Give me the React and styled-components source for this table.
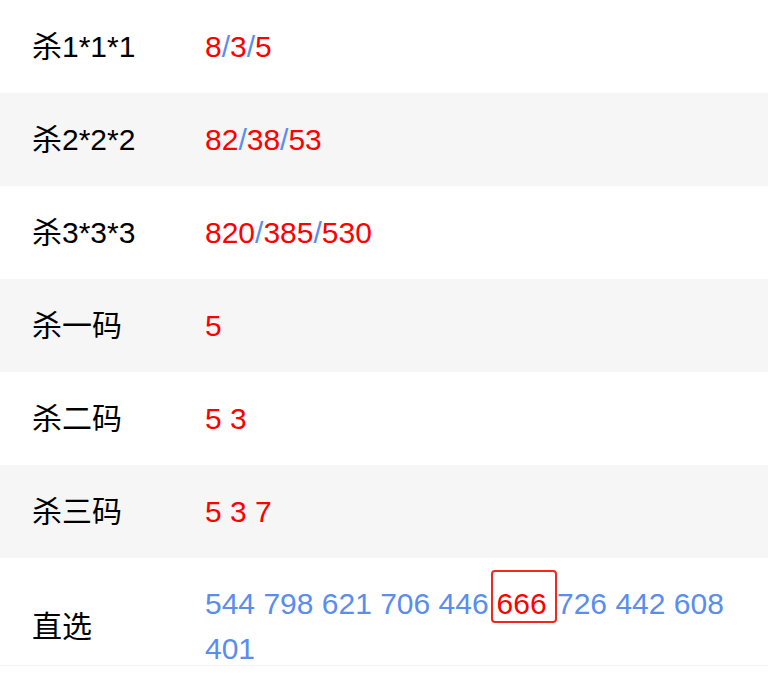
import React from 'react';
import styled, { createGlobalStyle } from 'styled-components';

const Global = createGlobalStyle`
    body {
        margin: 0;
        background: #fff;
        font-family: "Liberation Sans", "Noto Sans CJK SC", sans-serif;
    }
`;

const Table = styled.div`
    width: 768px;
    border-bottom: 1px solid #f3f3f3;
`;

const Row = styled.div`
    box-sizing: border-box;
    display: grid;
    grid-template-columns: 173px 1fr;
    align-items: center;
    height: ${p => (p.tall ? '107px' : '93px')};
    padding: ${p => (p.tall ? '23px 32px 0 32px' : '0 32px')};
    background: ${p => (p.shaded ? '#f6f6f6' : '#fff')};
`;

const Label = styled.div`
    font-size: 30px;
    line-height: 45px;
    color: #000;
`;

const Value = styled.div`
    font-size: 30px;
    line-height: 45px;
    color: ${p => (p.blue ? '#5b8dec' : '#ff0000')};
`;

const Sep = styled.span`
    color: #5b8dec;
`;

const Hot = styled.span`
    color: #ff0000;
    border: 2px solid #f5261c;
    border-radius: 4px;
    margin-left: 2px;
    padding: 15px 0 1px 4px;
`;

const rows = [
    { label: '杀1*1*1', kill: ['8', '3', '5'] },
    { label: '杀2*2*2', kill: ['82', '38', '53'] },
    { label: '杀3*3*3', kill: ['820', '385', '530'] },
    { label: '杀一码', text: '5' },
    { label: '杀二码', text: '5 3' },
    { label: '杀三码', text: '5 3 7' },
];

function Kill({ nums }) {
    return nums.map((n, i) => (
        <React.Fragment key={i}>
            {i > 0 && <Sep>/</Sep>}
            {n}
        </React.Fragment>
    ));
}

export default function App() {
    return (
        <>
            <Global />
            <Table>
                {rows.map((r, i) => (
                    <Row key={r.label} shaded={i % 2 === 1}>
                        <Label>{r.label}</Label>
                        <Value>{r.kill ? <Kill nums={r.kill} /> : r.text}</Value>
                    </Row>
                ))}
                <Row tall>
                    <Label>直选</Label>
                    <Value blue>
                        544 798 621 706 446<Hot>666 </Hot>726 442 608 401
                    </Value>
                </Row>
            </Table>
        </>
    );
}
